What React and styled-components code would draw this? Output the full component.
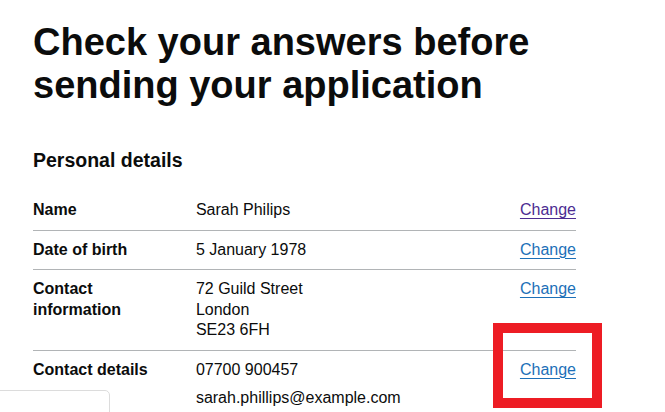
import React from 'react'
import styled, { createGlobalStyle } from 'styled-components'

const GlobalStyle = createGlobalStyle`
    html, body {
        margin: 0;
        padding: 0;
        background: #ffffff;
    }
    body {
        font-family: "Liberation Sans", Arial, sans-serif;
        color: #0b0c0c;
        -webkit-font-smoothing: antialiased;
    }
`

const Page = styled.main`
    position: relative;
    padding: 21px 89px 0 33px;
    min-height: 412px;
    box-sizing: border-box;
`

const Title = styled.h1`
    margin: 0 0 41px;
    font-size: 38px;
    line-height: 43px;
    font-weight: 700;
`

const SectionTitle = styled.h2`
    margin: 0 0 18px;
    font-size: 19.5px;
    line-height: 25px;
    font-weight: 700;
`

const SummaryList = styled.dl`
    margin: 0;
    font-size: 16px;
    line-height: 20.5px;
`

const Row = styled.div`
    display: grid;
    grid-template-columns: 30% 50% 20%;
    border-bottom: ${p => (p.$last ? 'none' : '1px solid #b1b4b6')};
`

const Key = styled.dt`
    margin: 0;
    padding: 9px 20px 9px 0;
    font-weight: 700;
`

const Value = styled.dd`
    margin: 0;
    padding: 9px 20px 9px 0;
    p {
        margin: 0 0 8px;
    }
    p:last-child {
        margin-bottom: 0;
    }
`

const Actions = styled.dd`
    margin: 0;
    padding: 9px 0;
    text-align: right;
`

const ChangeLink = styled.a`
    color: ${p => (p.$visited ? '#4c2c92' : '#1d70b8')};
    text-decoration: underline;
    text-decoration-thickness: 1px;
    text-underline-offset: 3px;
    cursor: pointer;
`

const Highlight = styled.div`
    position: absolute;
    left: 493px;
    top: 323px;
    width: 109px;
    height: 85px;
    box-sizing: border-box;
    border: 10px solid #ed1c24;
    pointer-events: none;
`

const CornerPanel = styled.div`
    position: fixed;
    left: -1px;
    top: 390px;
    width: 111px;
    height: 40px;
    box-sizing: border-box;
    background: #ffffff;
    border: 1px solid #dcdcdc;
    border-radius: 0 5px 0 0;
`

const rows = [
    { key: 'Name', value: ['Sarah Philips'], visited: true },
    { key: 'Date of birth', value: ['5 January 1978'] },
    { key: 'Contact information', value: ['72 Guild Street', 'London', 'SE23 6FH'], lines: true },
    { key: 'Contact details', value: ['07700 900457', 'sarah.phillips@example.com'] },
]

export default function App() {
    return (
        <>
            <GlobalStyle />
            <Page>
                <Title>
                    Check your answers before
                    <br />
                    sending your application
                </Title>
                <SectionTitle>Personal details</SectionTitle>
                <SummaryList>
                    {rows.map((row, i) => (
                        <Row key={row.key} $last={i === rows.length - 1}>
                            <Key>{row.key}</Key>
                            <Value>
                                {row.lines
                                    ? row.value.map((line, j) => (
                                          <React.Fragment key={line}>
                                              {line}
                                              {j < row.value.length - 1 && <br />}
                                          </React.Fragment>
                                      ))
                                    : row.value.map(line => <p key={line}>{line}</p>)}
                            </Value>
                            <Actions>
                                <ChangeLink href="#" $visited={row.visited}>
                                    Change
                                </ChangeLink>
                            </Actions>
                        </Row>
                    ))}
                </SummaryList>
                <Highlight />
            </Page>
            <CornerPanel />
        </>
    )
}
